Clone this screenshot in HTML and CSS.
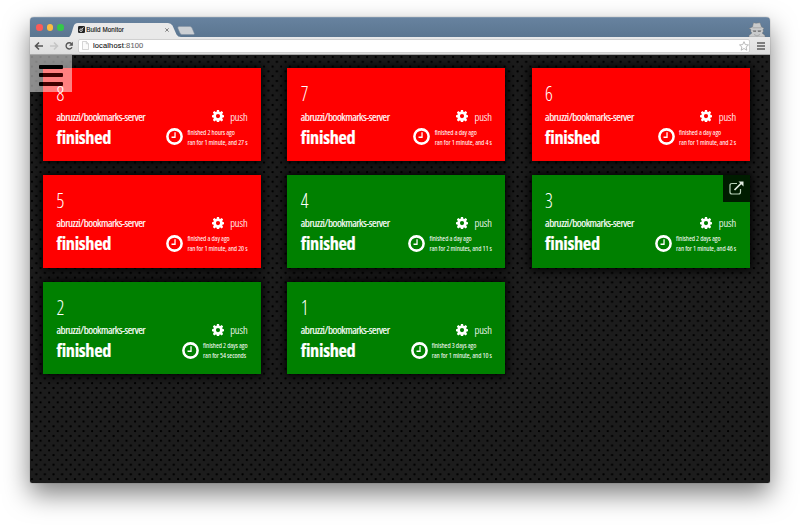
FILE: index.html
```
<!DOCTYPE html>
<html lang="en">
<head>
<meta charset="utf-8">
<title>Build Monitor</title>
<link rel="stylesheet" href="styles.css">
</head>
<body>
<svg class="defs" width="0" height="0">
  <symbol id="gear" viewBox="0 0 24 24"><path fill-rule="evenodd" d="M9.9 0h4.2l.6 3.300 1.900.8L19.400 2.200l2.900 2.900-1.900 2.800.8 1.900 2.800.6v4.200l-2.800.6-.8 1.900 1.900 2.800-2.900 2.900-2.800-1.900-1.900.8-.6 3.300H9.900l-.6-3.300-1.900-.8-2.800 1.900-2.900-2.900 1.900-2.800-.8-1.900L0 14.600v-4.200l2.800-.6.8-1.900-1.900-2.800 2.900-2.900 2.800 1.900 1.900-.8zM12 8a4.200 4.200 0 1 0 0 8.400A4.200 4.200 0 0 0 12 8z"/></symbol>
  <symbol id="clock" viewBox="0 0 16 16"><circle cx="8" cy="8" r="6.700" fill="none" stroke="#fff" stroke-width="2.400"/><path d="M8.500 4v4.700H5.200" fill="none" stroke="#fff" stroke-width="1.200"/></symbol>
</svg>
<div class="window">
  <header class="tabs">
    <i class="light close"></i><i class="light mini"></i><i class="light full"></i>
    <div class="tab">
      <svg class="tabshape" viewBox="0 0 112 14" preserveAspectRatio="none"><path d="M0 14C3 13 3.500 3 6 1Q7 0 9 0H99Q102 0 103.500 2.500L107.500 11.500Q109 14 112 14Z" fill="#e9e9e9"/></svg>
      <svg class="favicon" viewBox="0 0 7 7"><rect width="7" height="7" rx="1.200" fill="#222"/><circle cx="3" cy="4.200" r="1.300" fill="none" stroke="#fff" stroke-width=".8"/><path d="M4 3.200 5.500 1.300" stroke="#fff" stroke-width=".8"/></svg>
      <span class="title">Build Monitor</span>
      <svg class="x" viewBox="0 0 4 4"><path d="M.3.3 3.700 3.700M3.700.3.3 3.700" stroke="#666" stroke-width=".8"/></svg>
    </div>
    <svg class="newtab" viewBox="0 0 18 9"><path d="M2 .5H13Q14.500.5 15 2L17.300 7.500Q17.500 8.500 16.500 8.500H5Q3.500 8.500 3 7L.8 2Q.5.5 2 .5Z" fill="#ccd0d4" stroke="#8593a2" stroke-width=".5"/></svg>
    <svg class="spy" viewBox="0 0 18 15"><path d="M5.500.8 8 1.300 12 .8 13.500 5 16 6.300 15 7.500 15.300 10 14 11 17 13.500V15H1V13.500L4 11 2.800 9.500 3 7.500 1 6.500 4.500 5Z" fill="#c9cbcc" stroke="#777" stroke-width=".4"/><path d="M4.500 8.500H8.300L8 9.800H5.500ZM9.500 8.500H13.500L12.500 9.800H10Z" fill="#666"/><path d="M4.500 5.800H13.500M6 12.500 9 14 12 12.500" stroke="#999" stroke-width=".7" fill="none"/></svg>
  </header>
  <div class="toolbar">
    <svg class="nav" viewBox="0 0 10 10"><path d="M9 5H2M5 1.500 1.500 5 5 8.500" fill="none" stroke="#555" stroke-width="1.600"/></svg>
    <svg class="nav" viewBox="0 0 10 10"><path d="M1 5H8M5 1.500 8.500 5 5 8.500" fill="none" stroke="#c6c6c6" stroke-width="1.600"/></svg>
    <svg class="nav" viewBox="0 0 10 10"><path d="M7.600 2.900A3.100 3.100 0 1 0 8 6.200" fill="none" stroke="#555" stroke-width="1.400"/><path d="M8.900.8V4.700H5Z" fill="#555"/></svg>
    <div class="address">
      <svg class="page" viewBox="0 0 7 9"><path d="M.5.5H4.300L6.500 2.700V8.500H.5ZM4.300.5V2.700H6.500" fill="#fafafa" stroke="#bbb" stroke-width=".6"/></svg>
      <span class="url">localhost<span>:8100</span></span>
      <svg class="star" viewBox="0 0 10 10"><path d="M5 .7 6.300 3.600 9.500 3.900 7.100 6 7.800 9.200 5 7.500 2.200 9.200 2.900 6 .5 3.900 3.700 3.600Z" fill="#fff" stroke="#aaa" stroke-width=".8"/></svg>
    </div>
    <svg class="menu" viewBox="0 0 8 8"><path d="M0 1H8M0 4H8M0 7H8" stroke="#5c5c5c" stroke-width="1.700"/></svg>
  </div>
  <main class="page-body">
    <div class="grid" id="grid"></div>
    <div class="burger"><i></i><i></i><i></i></div>
  </main>
</div>
<script src="script.js"></script>
</body>
</html>
```
FILE: styles.css
```
* { box-sizing: border-box; }
body { margin: 0; width: 800px; height: 525px; overflow: hidden; background: #fff; padding: 17px 29.500px 0; }
svg { display: block; flex: none; }
.defs { position: absolute; }
.window { width: 740.800px; height: 465.500px; border-radius: 4px 4px 2px 2px; overflow: hidden; display: flex; flex-direction: column; box-shadow: 0 11px 26px rgba(0,0,0,.5), 0 0 1px rgba(0,0,0,.6); font-family: "Open Sans", sans-serif; }
.tabs { height: 19.700px; flex: none; display: flex; align-items: flex-end; background: linear-gradient(#67829f, #5b7690); padding-left: 6.500px; border-top: 1px solid #7c93ab; }
.light { width: 6.500px; height: 6.500px; border-radius: 50%; margin: 0 4.100px 6.200px 0; }
.close { background: #fc5b57; }
.mini { background: #fdbc40; }
.full { background: #34c84a; }
.tab { position: relative; width: 112px; height: 14px; margin-left: 1px; display: flex; align-items: center; padding-left: 9px; }
.tabshape { position: absolute; left: 0; top: 0; width: 112px; height: 14px; }
.favicon { position: relative; width: 7px; height: 7px; }
.title { position: relative; font: 6.300px/14px "Liberation Sans", sans-serif; letter-spacing: .07px; color: #111; margin-left: 1.500px; width: 79px; -webkit-text-stroke: .12px #111; }
.x { position: relative; width: 4px; height: 4px; }
.newtab { width: 18px; height: 9px; margin: 0 0 2px -4px; }
.spy { width: 18px; height: 15px; margin-left: auto; margin-right: 4px; }
.toolbar { height: 18.500px; flex: none; display: flex; align-items: center; background: linear-gradient(#e9e9e9, #dedede); border-bottom: 1px solid #aaa; padding: .8px 0 0 4.500px; }
.nav { width: 10px; height: 10px; margin-right: 5px; }
.address { width: 671.500px; height: 14px; background: #fff; border: 1px solid #d0d0d0; border-radius: 2px; display: flex; align-items: center; padding: 0 0 0 3px; margin-left: -1px; }
.page { width: 7px; height: 9px; }
.url { font: 7.500px/12px "Liberation Sans", sans-serif; letter-spacing: .14px; color: #111; margin-left: 4px; flex: 1; -webkit-text-stroke: .1px; }
.url span { color: #666; }
.star { width: 10px; height: 10px; }
.menu { width: 8px; height: 8px; margin-left: 7px; }
.page-body { position: relative; flex: 1; background-color: #1c1c1c; background-image: radial-gradient(circle at 2px 2px, #000 .7px, transparent 1.500px), radial-gradient(circle at 6.300px 6.800px, #000 .7px, transparent 1.500px); background-size: 8.600px 9.600px; padding: 13.200px 0 0 13.500px; }
.grid { display: grid; grid-template-columns: repeat(3, 218px); gap: 14.200px 26.300px; }
.card { position: relative; height: 92.500px; color: #fff; padding: 14px 13.500px 0; box-shadow: 0 0 9px 2px #000; font-stretch: 75%; white-space: nowrap; }
.red { background: #f00; }
.green { background: #008000; }
.row { display: flex; justify-content: space-between; align-items: center; }
.num { font-size: 19.200px; font-weight: 300; line-height: 24px; height: 23.300px; }
.repo { font-size: 11px; line-height: 21px; height: 21px; }
.repo > span:first-child { letter-spacing: -.44px; -webkit-text-stroke: .15px #fff; }
.state { font-size: 18.300px; font-weight: 700; line-height: 20px; height: 20px; }
.state > span:first-child { letter-spacing: -.3px; -webkit-text-stroke: .2px #fff; }
.push { display: flex; align-items: center; font-weight: 300; letter-spacing: -.1px; -webkit-text-stroke: .1px #fff; }
.gear { width: 12px; height: 12px; fill: #fff; margin-right: 6.500px; }
.time { display: flex; align-items: center; font-size: 7.100px; font-weight: 400; line-height: 10px; letter-spacing: -.11px; }
.clock { width: 17px; height: 17px; margin-right: 4.200px; }
.burger { position: absolute; left: 0; top: 0; width: 42.500px; height: 37px; background: rgba(255,255,255,.5); padding: 10px 9px; display: flex; flex-direction: column; gap: 4.200px; }
.burger i { width: 24.500px; height: 4px; border-radius: 1px; background: #000; flex: none; }
.burger i + i { background: linear-gradient(90deg, #000 4.500px, #700 4.500px); background: linear-gradient(90deg, #000 4.500px, #400000 4.500px); }
.open { position: absolute; right: 0; top: 0; width: 26.500px; height: 26.500px; background: #001c00; padding: 6px; }
.open svg { width: 15px; height: 14px; }
```
FILE: script.js
```
const builds = [
  [8, 'red', '2 hours ago', '1 minute, and 27 s'],
  [7, 'red', 'a day ago', '1 minute, and 4 s'],
  [6, 'red', 'a day ago', '1 minute, and 2 s'],
  [5, 'red', 'a day ago', '1 minute, and 20 s'],
  [4, 'green', 'a day ago', '2 minutes, and 11 s'],
  [3, 'green', '2 days ago', '1 minute, and 46 s'],
  [2, 'green', '2 days ago', '54 seconds'],
  [1, 'green', '3 days ago', '1 minute, and 10 s']
];
const open = '<div class="open"><svg viewBox="0 0 15 14"><path d="M8 2.500H3Q1 2.500 1 4.500V11Q1 13 3 13H9.500Q11.500 13 11.500 11V8" fill="none" stroke="#b8d0b8" stroke-width="1.200"/><path d="M5.500 9 12.500 2" stroke="#dfeadf" stroke-width="1.700"/><path d="M9.500.5H14.500V5.500Z" fill="#dfeadf"/></svg></div>';
document.getElementById('grid').innerHTML = builds.map(([n, color, ago, ran]) => `
<article class="card ${color}">
  <div class="num">${n}</div>
  <div class="row repo"><span>abruzzi/bookmarks-server</span><span class="push"><svg class="gear"><use href="#gear"/></svg>push</span></div>
  <div class="row state"><span>finished</span><span class="time"><svg class="clock"><use href="#clock"/></svg><span>finished ${ago}<br>ran for ${ran}</span></span></div>
  ${n === 3 ? open : ''}
</article>`).join('');
```
